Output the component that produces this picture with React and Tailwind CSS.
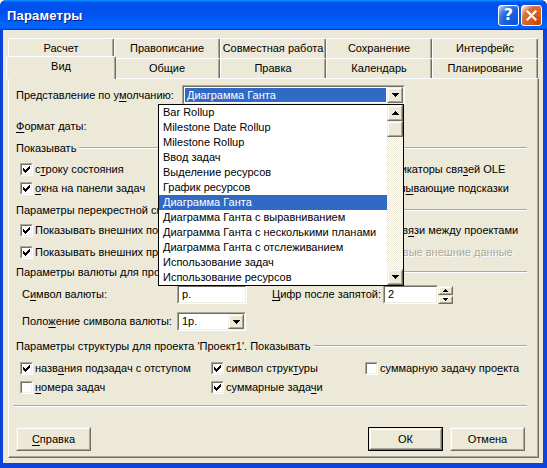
import React from "react";

function Raised({ className = "", innerClassName = "", children }) {
  return (
    <div className={`border border-t-[#F1EFE2] border-l-[#F1EFE2] border-r-[#716F64] border-b-[#716F64] ${className}`}>
      <div className={`w-full h-full border border-t-white border-l-white border-r-[#ACA899] border-b-[#ACA899] bg-[#ECE9D8] flex items-center justify-center ${innerClassName}`}>
        {children}
      </div>
    </div>
  );
}

function Sunken({ className = "", innerClassName = "", children }) {
  return (
    <div className={`border border-t-[#ACA899] border-l-[#ACA899] border-r-white border-b-white ${className}`}>
      <div className={`w-full h-full border border-t-[#716F64] border-l-[#716F64] border-r-[#F1EFE2] border-b-[#F1EFE2] bg-white flex items-center ${innerClassName}`}>
        {children}
      </div>
    </div>
  );
}

const DownArrow = () => (
  <svg width="7" height="4" viewBox="0 0 7 4" shapeRendering="crispEdges">
    <rect x="0" y="0" width="7" height="1" fill="#000" />
    <rect x="1" y="1" width="5" height="1" fill="#000" />
    <rect x="2" y="2" width="3" height="1" fill="#000" />
    <rect x="3" y="3" width="1" height="1" fill="#000" />
  </svg>
);

const UpArrow = () => (
  <svg width="7" height="4" viewBox="0 0 7 4" shapeRendering="crispEdges">
    <rect x="3" y="0" width="1" height="1" fill="#000" />
    <rect x="2" y="1" width="3" height="1" fill="#000" />
    <rect x="1" y="2" width="5" height="1" fill="#000" />
    <rect x="0" y="3" width="7" height="1" fill="#000" />
  </svg>
);

const SmallUp = () => (
  <svg width="5" height="3" viewBox="0 0 5 3" shapeRendering="crispEdges">
    <rect x="2" y="0" width="1" height="1" fill="#000" />
    <rect x="1" y="1" width="3" height="1" fill="#000" />
    <rect x="0" y="2" width="5" height="1" fill="#000" />
  </svg>
);

const SmallDown = () => (
  <svg width="5" height="3" viewBox="0 0 5 3" shapeRendering="crispEdges">
    <rect x="0" y="0" width="5" height="1" fill="#000" />
    <rect x="1" y="1" width="3" height="1" fill="#000" />
    <rect x="2" y="2" width="1" height="1" fill="#000" />
  </svg>
);

function Check({ checked = false, disabled = false }) {
  return (
    <div className="w-[13px] h-[13px] shrink-0 border border-t-[#ACA899] border-l-[#ACA899] border-r-white border-b-white">
      <div
        className={`w-full h-full border border-t-[#716F64] border-l-[#716F64] border-r-[#F1EFE2] border-b-[#F1EFE2] p-px ${
          disabled ? "bg-[#ECE9D8]" : "bg-white"
        }`}
      >
        {checked && (
          <svg width="7" height="7" viewBox="0 0 7 7" shapeRendering="crispEdges" className="block">
            <rect x="6" y="0" width="1" height="1" fill="#000" />
            <rect x="5" y="1" width="2" height="1" fill="#000" />
            <rect x="0" y="2" width="1" height="1" fill="#000" />
            <rect x="4" y="2" width="3" height="1" fill="#000" />
            <rect x="0" y="3" width="2" height="1" fill="#000" />
            <rect x="3" y="3" width="3" height="1" fill="#000" />
            <rect x="0" y="4" width="5" height="1" fill="#000" />
            <rect x="1" y="5" width="3" height="1" fill="#000" />
            <rect x="2" y="6" width="1" height="1" fill="#000" />
          </svg>
        )}
      </div>
    </div>
  );
}

function CB({ checked, disabled, children, className = "" }) {
  return (
    <div className={`flex items-center gap-[2px] whitespace-nowrap ${className}`}>
      <Check checked={checked} disabled={disabled} />
      <span className={disabled ? "text-[#ACA899] [text-shadow:1px_1px_0_#fff]" : ""}>{children}</span>
    </div>
  );
}

function Group({ children, className = "" }) {
  return (
    <div className={`flex items-center h-[14px] pl-[7px] pr-[11px] ${className}`}>
      <span className="whitespace-nowrap">{children}</span>
      <div className="flex-1 ml-[3px] h-[2px] border-t border-b border-t-[#ACA899] border-b-white" />
    </div>
  );
}

const U = ({ children }) => <span className="underline underline-offset-[2px]">{children}</span>;

const items = [
  "Bar Rollup",
  "Milestone Date Rollup",
  "Milestone Rollup",
  "Ввод задач",
  "Выделение ресурсов",
  "График ресурсов",
  "Диаграмма Ганта",
  "Диаграмма Ганта с выравниванием",
  "Диаграмма Ганта с несколькими планами",
  "Диаграмма Ганта с отслеживанием",
  "Использование задач",
  "Использование ресурсов",
];

function Tab({ children, selected = false }) {
  if (selected) {
    return (
      <div className="relative z-10 w-[110px] h-[23px] -mt-[2px] -mb-[1px] -ml-[2px] -mr-[2px] bg-[#ECE9D8] border-t border-l border-r border-t-white border-l-white border-r-[#716F64] rounded-t-[2px] shadow-[inset_-1px_0_0_#ACA899] flex items-center justify-center pb-[3px]">
        {children}
      </div>
    );
  }
  return (
    <div className="w-[106px] h-[20px] bg-[#ECE9D8] border-t border-l border-r border-t-white border-l-white border-r-[#716F64] rounded-t-[2px] shadow-[inset_-1px_0_0_#ACA899] flex items-center justify-center">
      {children}
    </div>
  );
}

export default function App() {
  return (
    <div className="w-[547px] h-[468px] bg-[#0B43DC] flex flex-col pb-[5px] rounded-t-[6px] overflow-hidden font-['Liberation_Sans',Arial,sans-serif] text-[11px] text-black leading-none select-none">
      {/* Title bar */}
      <div className="h-[30px] shrink-0 flex items-center pl-[7px] pr-[5px] bg-[linear-gradient(180deg,#0997FF_0%,#0053EE_8%,#0050EE_40%,#0066FF_88%,#0066FF_93%,#005BFF_95%,#003DD7_96%,#003DD7_100%)]">
        <span className="text-white font-bold text-[13px] pt-[1px] [text-shadow:1px_1px_0_#0A1A80] tracking-[0.2px]">Параметры</span>
        <div className="flex-1" />
        <div className="w-[21px] h-[21px] rounded-[3px] border border-white flex items-center justify-center bg-[radial-gradient(circle_at_90%_90%,#0054E9_0%,#2263D5_55%,#4479E4_70%,#A3BBEC_90%,#FFFFFF_100%)]">
          <span className="text-white font-bold text-[16px] leading-none font-['DejaVu_Sans',sans-serif]">?</span>
        </div>
        <div className="w-[21px] h-[21px] ml-[2px] rounded-[3px] border border-white flex items-center justify-center bg-[radial-gradient(circle_at_90%_90%,#CC4600_0%,#DC6527_55%,#CD7546_70%,#FFCCB2_90%,#FFFFFF_100%)]">
          <svg width="11" height="11" viewBox="0 0 11 11">
            <path d="M1.5 1.5L9.5 9.5M9.5 1.5L1.5 9.5" stroke="#fff" strokeWidth="2.2" strokeLinecap="square" />
          </svg>
        </div>
      </div>

      {/* Body */}
      <div className="flex-1 ml-[3px] mr-[4px] bg-[#ECE9D8] pt-[8px] pl-[5px]">
        {/* Tabs */}
        <div className="flex w-[530px]">
          <Tab>Расчет</Tab>
          <Tab>Правописание</Tab>
          <Tab>Совместная работа</Tab>
          <Tab>Сохранение</Tab>
          <Tab>Интерфейс</Tab>
        </div>
        <div className="flex w-[530px] h-[20px] items-start">
          <Tab selected>Вид</Tab>
          <Tab>Общие</Tab>
          <Tab>Правка</Tab>
          <Tab>Календарь</Tab>
          <Tab>Планирование</Tab>
        </div>

        {/* Panel */}
        <div className="w-[531px] h-[380px] border border-t-white border-l-white border-r-[#716F64] border-b-[#716F64] shadow-[inset_-1px_-1px_0_#ACA899] flex flex-col">
          {/* Default view */}
          <div className="mt-[6px] h-[20px] flex items-center pl-[7px] relative z-20">
            <span className="w-[166px] whitespace-nowrap">
              Представление по у<U>м</U>олчанию:
            </span>
            <div className="relative">
              <Sunken className="w-[223px] h-[20px]">
                <div className="flex-1 h-full p-px">
                  <div className="h-full bg-[#316AC5] text-white flex items-center pl-[2px]">Диаграмма Ганта</div>
                </div>
                <Raised className="w-[16px] h-full">
                  <DownArrow />
                </Raised>
              </Sunken>

              {/* Dropdown list */}
              <div className="absolute left-[-24px] top-[19px] w-[246px] border border-black bg-white flex">
                <div className="w-[228px] flex flex-col">
                  {items.map((t, i) => (
                    <div
                      key={t}
                      className={`h-[15px] flex items-center pl-[4px] whitespace-nowrap ${
                        i === 6 ? "bg-[#316AC5] text-white" : ""
                      }`}
                    >
                      {t}
                    </div>
                  ))}
                </div>
                <div className="w-[16px] flex flex-col bg-[repeating-conic-gradient(#FFFFFF_0_25%,#ECE9D8_0_50%)] bg-[length:2px_2px]">
                  <Raised className="w-[16px] h-[16px]">
                    <UpArrow />
                  </Raised>
                  <Raised className="w-[16px] h-[16px]" />
                  <div className="flex-1" />
                  <Raised className="w-[16px] h-[16px]">
                    <DownArrow />
                  </Raised>
                </div>
              </div>
            </div>
          </div>

          {/* Date format */}
          <div className="mt-[11px] h-[20px] flex items-center pl-[7px]">
            <span>
              <U>Ф</U>ормат даты:
            </span>
          </div>

          <Group className="mt-[5px]">Показывать</Group>

          <div className="mt-[7px] h-[14px] flex items-center pl-[11px]">
            <CB checked className="w-[192px]">
              с<U>т</U>року состояния
            </CB>
            <CB checked className="w-[155px]">
              <U>п</U>олосы прокрутки
            </CB>
            <CB checked>
              индикаторы свя<U>з</U>ей OLE
            </CB>
          </div>
          <div className="mt-[5px] h-[14px] flex items-center pl-[11px]">
            <CB checked className="w-[192px]">
              <U>о</U>кна на панели задач
            </CB>
            <CB checked className="w-[155px]">
              строку <U>в</U>вода
            </CB>
            <CB checked>
              вспл<U>ы</U>вающие подсказки
            </CB>
          </div>

          <Group className="mt-[8px]">Параметры перекрестной связи проектов для 'Проект1'</Group>

          <div className="mt-[6px] h-[14px] flex items-center pl-[11px]">
            <CB checked className="w-[210px]">
              Показывать внешних последователей
            </CB>
            <CB checked>
              Показывать диалоговое окно св<U>я</U>зи между проектами
            </CB>
          </div>
          <div className="mt-[8px] h-[14px] flex items-center pl-[11px]">
            <CB checked className="w-[218px]">
              Показывать внешних предшественников
            </CB>
            <CB disabled>Автоматически принимать новые внешние данные</CB>
          </div>

          <Group className="mt-[6px]">Параметры валюты для проекта 'Проект1'</Group>

          <div className="mt-[6px] h-[19px] flex items-center pl-[13px]">
            <span className="w-[155px]">
              С<U>и</U>мвол валюты:
            </span>
            <Sunken className="w-[70px] h-[19px]" innerClassName="pl-[3px]">
              р.
            </Sunken>
            <span className="ml-[25px] w-[111px] whitespace-nowrap">
              <U>Ц</U>ифр после запятой:
            </span>
            <div className="flex items-center h-[19px]">
              <Sunken className="w-[55px] h-[19px]" innerClassName="pl-[3px]">
                2
              </Sunken>
              <div className="flex flex-col w-[15px] h-[18px] gap-px">
                <Raised className="w-[15px] h-[9px]">
                  <SmallUp />
                </Raised>
                <Raised className="w-[15px] h-[8px]">
                  <SmallDown />
                </Raised>
              </div>
            </div>
          </div>

          <div className="mt-[8px] h-[19px] flex items-center pl-[13px]">
            <span className="w-[155px]">
              Поло<U>ж</U>ение символа валюты:
            </span>
            <Sunken className="w-[69px] h-[19px]">
              <span className="flex-1 pl-[3px]">1р.</span>
              <Raised className="w-[16px] h-full">
                <DownArrow />
              </Raised>
            </Sunken>
          </div>

          <Group className="mt-[8px]">Параметры структуры для проекта 'Проект1'. Показывать</Group>

          <div className="mt-[8px] h-[14px] flex items-center pl-[11px]">
            <CB checked className="w-[191px]">
              назв<U>а</U>ния подзадач с отступом
            </CB>
            <CB checked className="w-[154px]">
              символ струк<U>т</U>уры
            </CB>
            <CB>
              суммарную задачу про<U>е</U>кта
            </CB>
          </div>
          <div className="mt-[5px] h-[14px] flex items-center pl-[11px]">
            <CB className="w-[191px]">
              <U>н</U>омера задач
            </CB>
            <CB checked>
              суммарные зада<U>ч</U>и
            </CB>
          </div>

          <div className="mt-[11px] ml-[5px] mr-[11px] h-[2px] border-t border-b border-t-[#ACA899] border-b-white" />

          <div className="mt-[20px] flex items-center pl-[7px]">
            <Raised className="w-[75px] h-[24px]">
              <span>
                <U>С</U>правка
              </span>
            </Raised>
            <div className="flex-1" />
            <div className="w-[75px] h-[24px] border border-black">
              <Raised className="w-full h-full">
                <span>ОК</span>
              </Raised>
            </div>
            <Raised className="w-[75px] h-[24px] ml-[7px] mr-[13px]">
              <span>Отмена</span>
            </Raised>
          </div>
        </div>
      </div>
    </div>
  );
}
